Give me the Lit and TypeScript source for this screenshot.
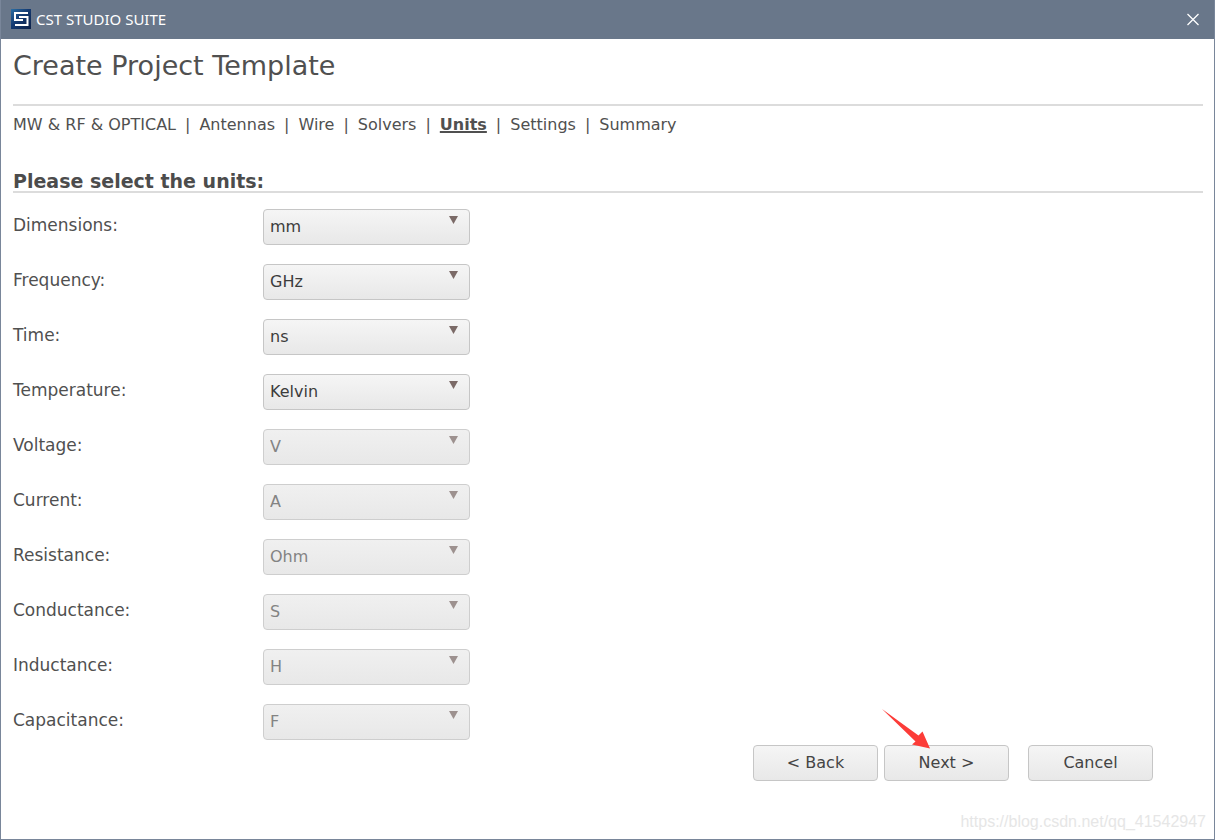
import { LitElement, html, css, svg } from "lit";
import { customElement, property } from "lit/decorators.js";

interface UnitField {
  id: string;
  label: string;
  options: string[];
  locked?: boolean;
}

const STEPS = ["MW & RF & OPTICAL", "Antennas", "Wire", "Solvers", "Units", "Settings", "Summary"];

const FIELDS: UnitField[] = [
  { id: "dimensions", label: "Dimensions:", options: ["mm", "cm", "m", "um", "nm"] },
  { id: "frequency", label: "Frequency:", options: ["GHz", "MHz", "kHz", "Hz", "THz"] },
  { id: "time", label: "Time:", options: ["ns", "us", "ms", "s", "ps"] },
  { id: "temperature", label: "Temperature:", options: ["Kelvin", "Celsius", "Fahrenheit"] },
  { id: "voltage", label: "Voltage:", options: ["V"], locked: true },
  { id: "current", label: "Current:", options: ["A"], locked: true },
  { id: "resistance", label: "Resistance:", options: ["Ohm"], locked: true },
  { id: "conductance", label: "Conductance:", options: ["S"], locked: true },
  { id: "inductance", label: "Inductance:", options: ["H"], locked: true },
  { id: "capacitance", label: "Capacitance:", options: ["F"], locked: true },
];

const logo = svg`
  <defs>
    <linearGradient id="logo-bg" x1="0" y1="0" x2="1" y2="1">
      <stop offset="0" stop-color="#2a6fa5"></stop>
      <stop offset="0.45" stop-color="#143a72"></stop>
      <stop offset="1" stop-color="#0c2148"></stop>
    </linearGradient>
  </defs>
  <rect width="20" height="20" fill="url(#logo-bg)"></rect>
  <path d="M17 4H4V11H12M8 8H16.5V16H4" fill="none" stroke="#fff" stroke-width="2"></path>`;

@customElement("title-bar")
export class TitleBar extends LitElement {
  static styles = css`
    :host {
      display: flex;
      align-items: center;
      gap: 5px;
      height: 39px;
      padding: 0 14px 1px 10px;
      box-sizing: border-box;
      background: #69778a;
      color: #fff;
      font: 15px/20px "Noto Sans", "Open Sans", sans-serif;
    }
    .logo { width: 20px; height: 20px; flex: none; }
    .title { flex: 1; }
    .close {
      display: flex;
      padding: 0;
      border: 0;
      background: none;
      color: inherit;
      cursor: pointer;
    }
  `;

  render() {
    return html`
      <svg class="logo" viewBox="0 0 20 20" aria-hidden="true">${logo}</svg>
      <span class="title">CST STUDIO SUITE</span>
      <button class="close" aria-label="Close">
        <svg width="14" height="14" viewBox="0 0 14 14" aria-hidden="true">
          <path d="M1.5 2L12.5 13M12.5 2L1.5 13" stroke="currentColor" stroke-width="1.3"></path>
        </svg>
      </button>
    `;
  }
}

@customElement("unit-row")
export class UnitRow extends LitElement {
  @property({ attribute: false }) field!: UnitField;

  static styles = css`
    :host {
      display: grid;
      grid-template-columns: 250px 207px;
      align-items: start;
    }
    label { font-size: 17px; line-height: 32px; }
    .box { position: relative; }
    .box::after {
      content: "";
      position: absolute;
      top: 7px;
      right: 12px;
      width: 9px;
      height: 8px;
      background: #7b6a67;
      clip-path: polygon(0 0, 100% 0, 50% 100%);
      pointer-events: none;
    }
    .select {
      appearance: none;
      display: block;
      width: 100%;
      height: 36px;
      margin: 0;
      padding: 0 24px 1px 6px;
      border: 1px solid #c6c6c6;
      border-radius: 4px;
      background: linear-gradient(#f5f5f5, #e8e8e8);
      color: #3c3c3c;
      font: inherit;
    }
    .select:disabled {
      background: linear-gradient(#f0f0f0, #e8e8e8);
      border-color: #cecece;
      color: #838383;
      opacity: 1;
    }
    .locked::after { background: #9d918f; }
  `;

  render() {
    const { id, label, options, locked } = this.field;
    return html`
      <label for=${id}>${label}</label>
      <div class="box ${locked ? "locked" : ""}">
        <select class="select" id=${id} ?disabled=${locked}>
          ${options.map((o) => html`<option>${o}</option>`)}
        </select>
      </div>
    `;
  }
}

@customElement("app-root")
export class AppRoot extends LitElement {
  static styles = css`
    :host {
      display: flex;
      flex-direction: column;
      position: relative;
      box-sizing: border-box;
      min-height: 100vh;
      border: 1px solid #79869a;
      border-top: 0;
      background: #fff;
      color: #505050;
      font: 16px/20px "DejaVu Sans", Verdana, sans-serif;
    }
    .content { padding: 0 11px 0 12px; }
    h1 {
      margin: 0;
      padding: 11px 0 23px;
      border-bottom: 2px solid #dcdcdc;
      font-size: 27px;
      line-height: 31px;
      font-weight: 400;
    }
    .steps {
      display: flex;
      flex-wrap: wrap;
      gap: 9px;
      padding: 9px 0 36px;
    }
    .steps a { color: inherit; text-decoration: none; }
    .steps .current {
      font-weight: 700;
      text-decoration: underline;
      text-decoration-thickness: 2px;
    }
    h2 {
      margin: 0;
      border-bottom: 2px solid #dcdcdc;
      font-size: 19px;
      line-height: 20px;
      font-weight: 700;
      color: #4c4c4c;
    }
    .units {
      display: flex;
      flex-direction: column;
      gap: 19px;
      padding-top: 16px;
    }
    .actions {
      display: flex;
      justify-content: flex-end;
      gap: 6px;
      padding: 5px 61px 0;
    }
    .action {
      width: 125px;
      height: 36px;
      padding: 0;
      border: 1px solid #c6c6c6;
      border-radius: 4px;
      background: linear-gradient(#f5f5f5, #e8e8e8);
      color: #444;
      font: inherit;
      cursor: pointer;
    }
    .cancel { margin-left: 13px; }
    .next { position: relative; }
    .pointer {
      position: absolute;
      left: -4px;
      top: -38px;
      width: 52px;
      height: 42px;
      pointer-events: none;
    }
    .watermark {
      position: absolute;
      right: 8px;
      bottom: 7px;
      color: #e6e6e6;
      font: 16px/20px "Liberation Sans", Arial, sans-serif;
    }
  `;

  render() {
    return html`
      <title-bar></title-bar>
      <main class="content">
        <h1>Create Project Template</h1>
        <nav class="steps">
          ${STEPS.map(
            (s, i) => html`${i ? html`<span>|</span>` : ""}<a href="#" class=${s === "Units" ? "current" : ""}>${s}</a>`
          )}
        </nav>
        <h2>Please select the units:</h2>
        <form class="units">${FIELDS.map((f) => html`<unit-row .field=${f}></unit-row>`)}</form>
      </main>
      <footer class="actions">
        <button class="action">&lt; Back</button>
        <button class="action next">
          Next &gt;
          <svg class="pointer" viewBox="0 0 52 42" aria-hidden="true">
            <path d="M1 1L37.5 27.5L41.5 23.5L49 40.5L31 36.5L34.5 33.5Z" fill="#fc3c38"></path>
          </svg>
        </button>
        <button class="action cancel">Cancel</button>
      </footer>
      <div class="watermark">https://blog.csdn.net/qq_41542947</div>
    `;
  }
}
